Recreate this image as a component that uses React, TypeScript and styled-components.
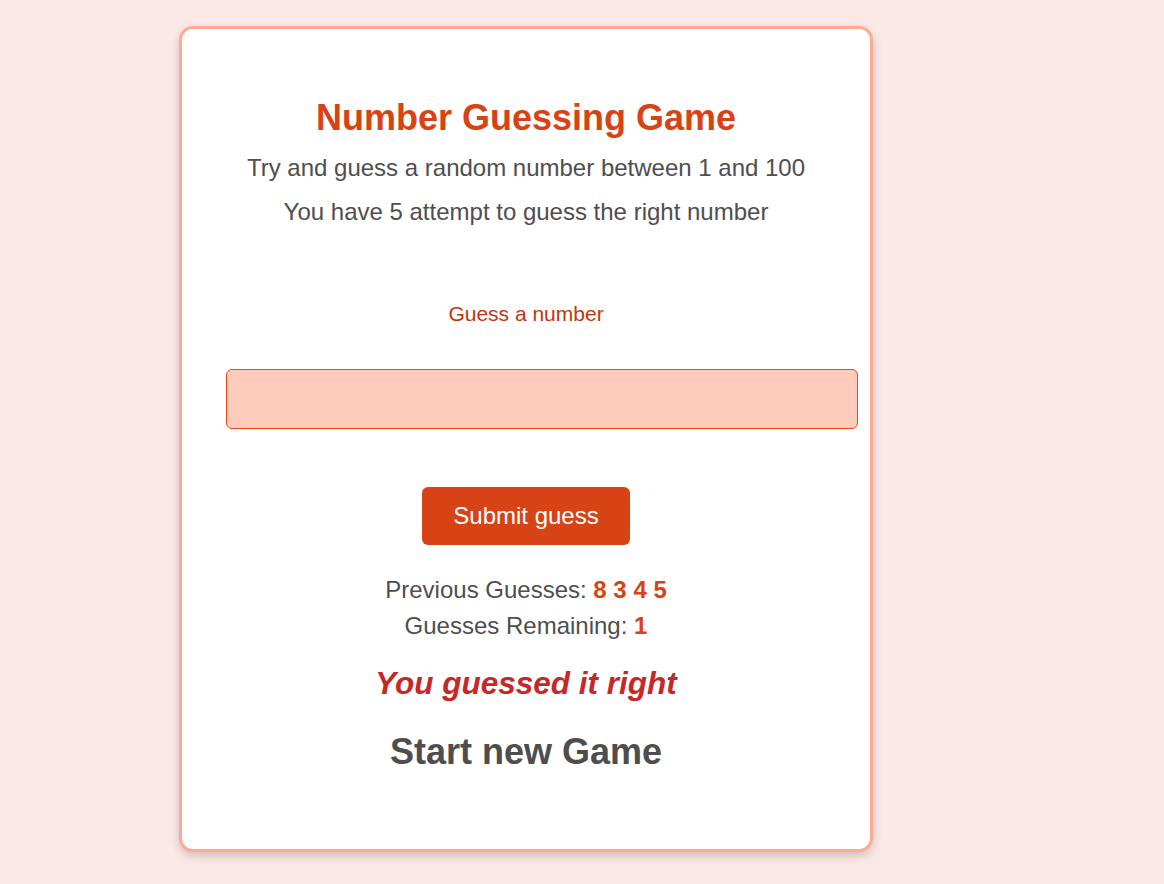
import React from "react";
import styled, { createGlobalStyle } from "styled-components";

const GlobalStyle = createGlobalStyle`
  html, body {
    margin: 0;
    padding: 0;
    background: #fbe9e7;
    font-family: "Liberation Sans", Arial, sans-serif;
  }
`;

const Page = styled.div`
  min-height: 884px;
  box-sizing: border-box;
  padding: 26px 0 0 179px;
`;

const Card = styled.main`
  width: 694px;
  box-sizing: border-box;
  background: #ffffff;
  border: 3px solid #ffab91;
  border-radius: 14px;
  box-shadow: 0 4px 10px rgba(0, 0, 0, 0.18);
  padding: 68px 44px 76px;
  display: flex;
  flex-direction: column;
  align-items: center;
  text-align: center;
`;

const Title = styled.h1`
  margin: 0;
  font-size: 36px;
  line-height: 41px;
  font-weight: 700;
  color: #d84315;
`;

const Subtitle = styled.p<{ $first?: boolean }>`
  margin: ${(p) => (p.$first ? "8px" : "0")} 0 0;
  font-size: 24px;
  line-height: 44px;
  color: #4e4e4e;
`;

const Form = styled.form`
  align-self: stretch;
  display: flex;
  flex-direction: column;
  align-items: center;
  margin-top: 68px;
`;

const Label = styled.label`
  font-size: 21px;
  line-height: 24px;
  color: #bf360c;
`;

const Input = styled.input`
  align-self: flex-start;
  box-sizing: content-box;
  width: 100%;
  height: 58px;
  padding: 0 15px;
  margin: 43px 0 0;
  border: 1px solid #e64a19;
  border-radius: 6px;
  background: #ffccbc;
  font-family: inherit;
  font-size: 24px;
  outline: none;
`;

const SubmitButton = styled.button`
  margin-top: 58px;
  height: 58px;
  padding: 0 31px;
  border: none;
  border-radius: 6px;
  background: #d84315;
  color: #ffffff;
  font-family: inherit;
  font-size: 24px;
  cursor: pointer;
`;

const Stats = styled.div`
  margin-top: 27px;
  display: flex;
  flex-direction: column;
  align-items: center;
`;

const StatLine = styled.p`
  margin: 0;
  font-size: 24px;
  line-height: 36px;
  color: #4e4e4e;
`;

const Highlight = styled.span`
  font-weight: 700;
  color: #d84315;
`;

const Result = styled.p`
  margin: 19px 0 0;
  font-size: 31.5px;
  line-height: 40px;
  font-weight: 700;
  font-style: italic;
  color: #c62828;
`;

const NewGame = styled.p`
  margin: 28px 0 0;
  font-size: 36px;
  line-height: 42px;
  font-weight: 700;
  color: #4e4e4e;
  cursor: pointer;
`;

export default function App() {
  return (
    <>
      <GlobalStyle />
      <Page>
        <Card>
          <Title>Number Guessing Game</Title>
          <Subtitle $first>Try and guess a random number between 1 and 100</Subtitle>
          <Subtitle>You have 5 attempt to guess the right number</Subtitle>
          <Form onSubmit={(e) => e.preventDefault()}>
            <Label htmlFor="guessField">Guess a number</Label>
            <Input id="guessField" type="text" />
            <SubmitButton type="submit">Submit guess</SubmitButton>
          </Form>
          <Stats>
            <StatLine>
              Previous Guesses: <Highlight>8 3 4 5</Highlight>
            </StatLine>
            <StatLine>
              Guesses Remaining: <Highlight>1</Highlight>
            </StatLine>
          </Stats>
          <Result>You guessed it right</Result>
          <NewGame>Start new Game</NewGame>
        </Card>
      </Page>
    </>
  );
}
